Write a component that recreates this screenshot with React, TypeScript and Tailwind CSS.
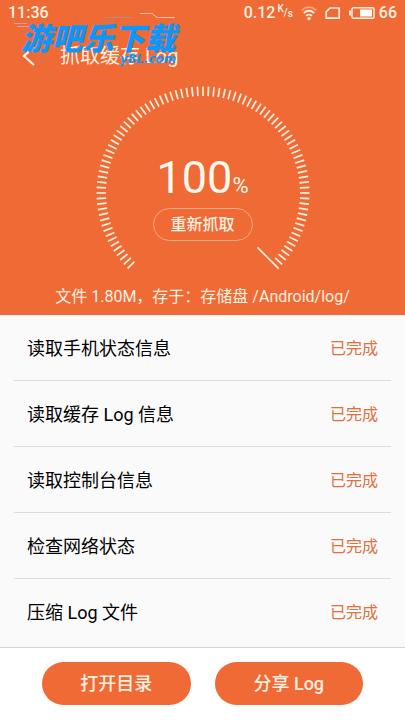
const FONT = "font-[Roboto,'Noto_Sans_CJK_SC',sans-serif]"

const steps = [
  { name: '读取手机状态信息', status: '已完成' },
  { name: '读取缓存 Log 信息', status: '已完成' },
  { name: '读取控制台信息', status: '已完成' },
  { name: '检查网络状态', status: '已完成' },
  { name: '压缩 Log 文件', status: '已完成' },
]

function StatusBar() {
  return (
    <div className="flex h-[26px] items-center justify-between px-2 text-base font-medium leading-6">
      <span>11:36</span>
      <div className="flex items-center">
        <span>0.12</span>
        <span className="ml-0.5 flex text-[10px] leading-4">
          <span className="-mt-1">K</span>
          <span>/</span>
          <span className="mt-px">s</span>
        </span>
        <svg className="ml-2 h-4 w-4" viewBox="0 0 16 16" fill="none" stroke="currentColor" strokeWidth="1.8">
          <path d="M0.8 5.2Q8 -1 15.2 5.2" opacity=".4" />
          <path d="M2.8 8Q8 3.6 13.2 8" />
          <path d="M5 10.9Q8 8.4 11 10.9" />
          <circle cx="8" cy="13.6" r="1.7" fill="currentColor" stroke="none" />
        </svg>
        <svg className="ml-2 h-4 w-4" viewBox="0 0 16 16" fill="none" stroke="currentColor" strokeWidth="1.7">
          <path d="M5 3H14.2V13.2H1.2V6.8Z" strokeLinejoin="round" />
        </svg>
        <svg className="ml-2 h-4 w-[26px]" viewBox="0 0 26 16" fill="none" stroke="currentColor" strokeWidth="1.5">
          <rect x="3" y="2.8" width="22" height="10.4" rx="1.5" />
          <path d="M1 5.5V10.5" strokeWidth="2" />
          <rect x="11" y="4.5" width="12" height="7" fill="#fff" stroke="none" />
        </svg>
        <span className="ml-1">66</span>
      </div>
    </div>
  )
}

function Watermark() {
  return (
    <svg className="pointer-events-none absolute left-2 top-2 h-16 w-48" viewBox="8 8 192 64">
      <g fill="none" stroke="#c8a5b5" strokeWidth="1">
        <path d="M14 23.5H27M17 26.5H29" />
        <path d="M105 17.5H131" stroke="#b98a8c" />
        <path d="M140 13.5H152L157 17.5H175" stroke="#f3c4ae" />
        <path d="M34 61.5H42L47 56" stroke="#c77a72" />
      </g>
      <text
        x="21"
        y="50"
        fill="#0c97fc"
        className="text-[31px] font-black italic font-['Noto_Sans_CJK_SC',sans-serif]"
      >
        游吧乐下载
      </text>
      <text
        x="120"
        y="63"
        fill="#0c97fc"
        className="text-[12px] font-bold italic font-['DejaVu_Sans',sans-serif]"
      >
        y8L.com
      </text>
    </svg>
  )
}

function Gauge() {
  const ticks = Array.from({ length: 90 }, (_, i) => -135 + i * 3)
  return (
    <svg className="h-[216px] w-[216px]" viewBox="-108 -108 216 216" stroke="#fff0dc">
      {ticks.map(angle => (
        <line key={angle} y1="-106.5" y2="-97" strokeWidth="1.7" transform={`rotate(${angle})`} />
      ))}
      <line y1="-107" y2="-77" strokeWidth="1.7" transform="rotate(135)" />
    </svg>
  )
}

export default function App() {
  return (
    <div className={`flex min-h-screen flex-col bg-white ${FONT}`}>
      <header className="relative bg-[#ef6a35] text-[#fff0e0]">
        <StatusBar />
        <div className="flex h-[60px] items-center px-5">
          <button aria-label="返回" className="flex h-8 w-8 items-center">
            <svg className="h-5 w-5" viewBox="0 0 20 20" fill="none" stroke="currentColor" strokeWidth="2.2">
              <path d="M14 1L4 10L14 19" />
            </svg>
          </button>
          <h1 className="ml-2 text-xl">抓取缓存 Log</h1>
        </div>
        <Watermark />
        <div className="-mt-px grid justify-items-center">
          <div className="col-start-1 row-start-1">
            <Gauge />
          </div>
          <div className="col-start-1 row-start-1 flex flex-col items-center pt-[67px]">
            <p className="text-[45px] leading-[52px] text-[#fff8ee]">
              100<span className="text-[22px]">%</span>
            </p>
            <button className="-mt-1 h-[33px] w-[100px] rounded-full border border-[#f8ab83] text-base font-medium">
              重新抓取
            </button>
          </div>
        </div>
        <p className="-mt-4 pb-[6px] text-center text-base leading-6">文件 1.80M，存于：存储盘 /Android/log/</p>
      </header>

      <main className="bg-[#fafafa] pb-0.5">
        <ul className="divide-y divide-[#dcdcdc] px-[14px]">
          {steps.map(step => (
            <li key={step.name} className="flex h-[66px] items-center justify-between px-[13px] pt-0.5">
              <span className="text-lg text-black">{step.name}</span>
              <span className="text-base text-[#e0713f]">{step.status}</span>
            </li>
          ))}
        </ul>
      </main>

      <footer className="flex flex-1 items-start gap-6 border-t border-[#d4d4d4] bg-white px-[42px] pt-[14px]">
        <button className="h-[43px] flex-1 rounded-full bg-[#ef6a35] text-lg font-medium text-[#fff0e0]">打开目录</button>
        <button className="h-[43px] flex-1 rounded-full bg-[#ef6a35] text-lg font-medium text-[#fff0e0]">分享 Log</button>
      </footer>
    </div>
  )
}
